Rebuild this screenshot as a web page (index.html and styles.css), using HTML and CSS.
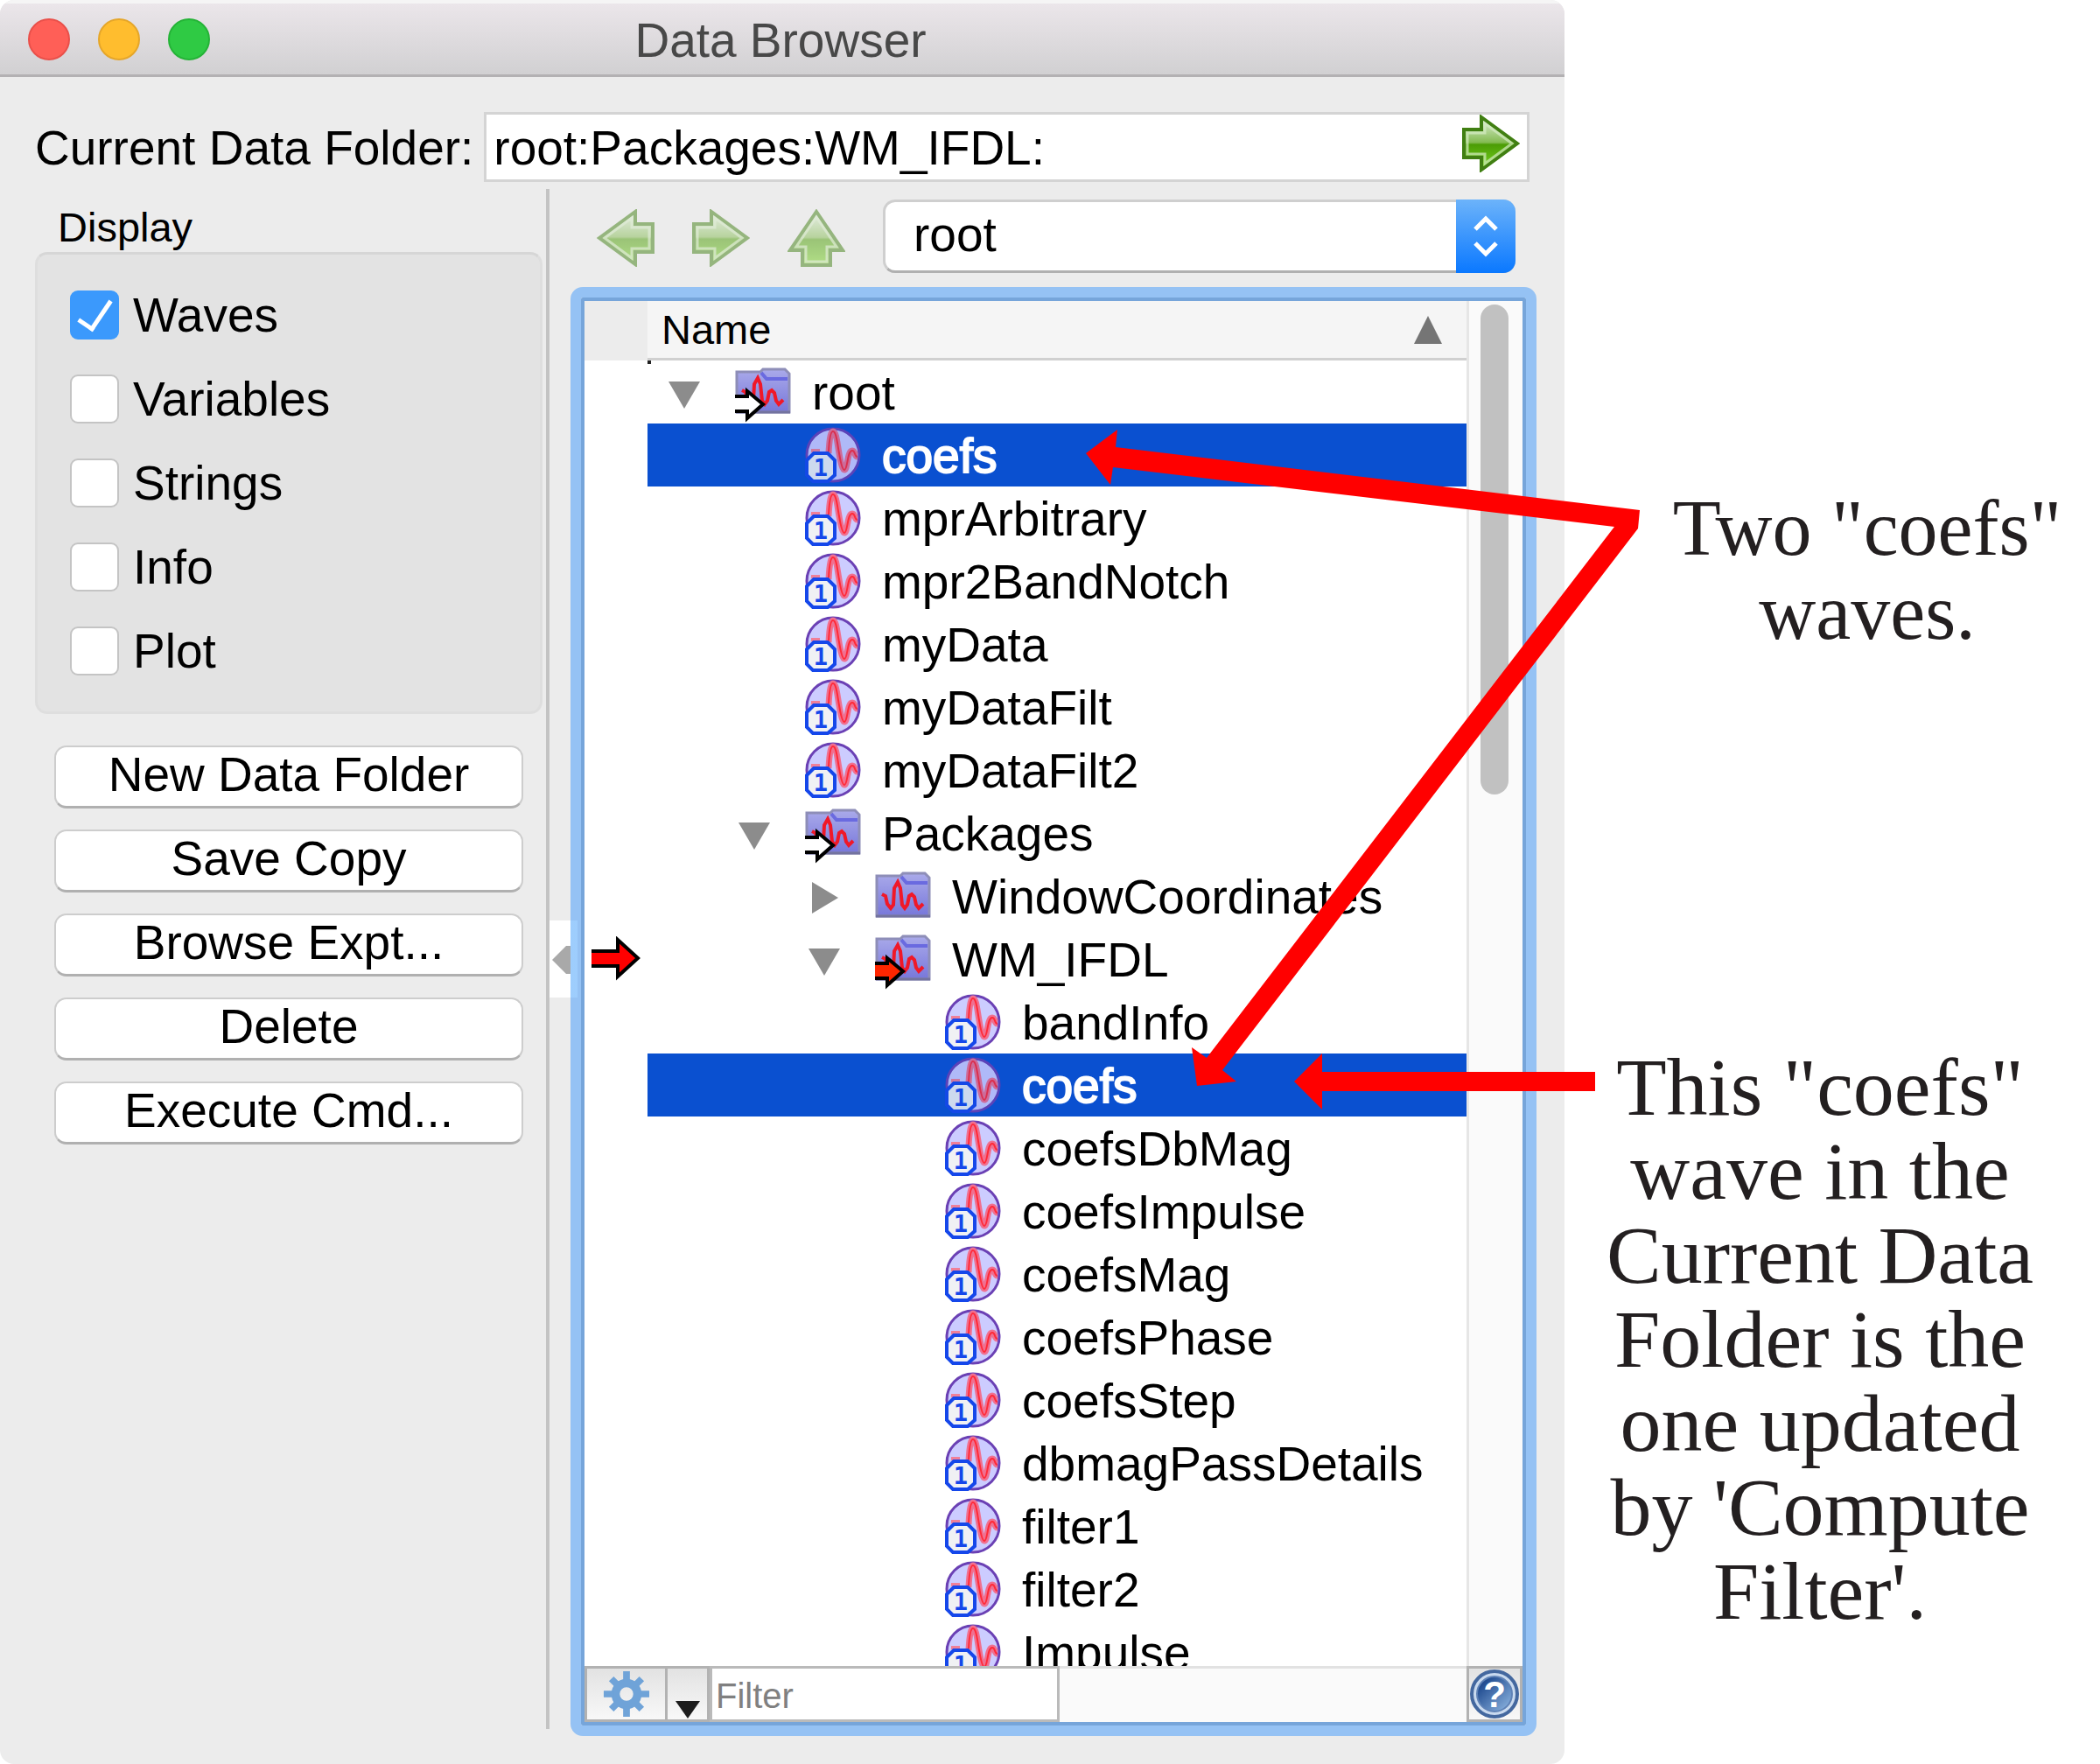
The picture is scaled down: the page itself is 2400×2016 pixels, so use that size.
FILE: index.html
```html
<!DOCTYPE html>
<html lang="en">
<head>
<meta charset="utf-8">
<title>Data Browser</title>
<link rel="stylesheet" href="styles.css">
</head>
<body>
<svg class="defs" aria-hidden="true">
  <defs>
    <linearGradient id="green" x1="0" y1="0" x2="0" y2="1">
      <stop offset="0.1" stop-color="#cfe6c0"/><stop offset="0.48" stop-color="#84bb52"/>
      <stop offset="0.52" stop-color="#4b9c04"/><stop offset="0.9" stop-color="#6fc81c"/>
    </linearGradient>
    <linearGradient id="folder" x1="0" y1="0" x2="0" y2="1">
      <stop offset="0" stop-color="#aaaaea"/><stop offset="1" stop-color="#7777da"/>
    </linearGradient>
    <linearGradient id="help" x1="0" y1="0" x2="1" y2="1">
      <stop offset="0.2" stop-color="#234e92"/><stop offset="0.9" stop-color="#86aedb"/>
    </linearGradient>
    <symbol id="i-arrow" viewBox="0 0 66 66">
      <path d="M2 17H22V3L63 33 22 63V49H2Z" fill="url(#green)" stroke="#407f12" stroke-width="4"/>
      <path d="M6 21H26V10L57 33 26 56V45H6Z" fill="none" stroke="#d6ecc4" stroke-opacity=".7" stroke-width="3"/>
    </symbol>
    <symbol id="i-folder" viewBox="0 0 64 72">
      <path d="M2 13H29L32 10H57L62 15V59H2Z" fill="url(#folder)" stroke="#8e8eb8" stroke-width="3"/>
      <path d="M30 14L36 21H60" fill="none" stroke="#6a6ae0" stroke-width="4"/>
      <path d="M1 59H63" stroke="#73739f" stroke-width="3"/>
      <path d="M8 34L12 36 14 45 18 50 21 46 22 27 26 20 29 27 31 46 34 50 37 46 39 36 42 34 45 37 47 46 50 50 55 45" fill="none" stroke="#f01828" stroke-width="4"/>
    </symbol>
    <symbol id="i-pointer" viewBox="0 0 64 72">
      <path d="M0 41H14V35L32 50 14 66V58H0Z"/>
      <path d="M0 41H14V35L32 50 14 66V58H0" fill="none" stroke="#000" stroke-width="4"/>
    </symbol>
    <symbol id="i-wave" viewBox="0 0 64 72">
      <circle cx="32" cy="36" r="30" fill="#ccccff" stroke="#6a40b4" stroke-width="3"/>
      <path d="M7 31H17" stroke="#f08098" stroke-width="4"/>
      <path d="M27 34C28 14 30 9 32 9 36 9 37 24 39 34 41 46 43 53 45 53 49 53 48 31 54 31 58 31 56 38 60 38" fill="none" stroke="#f07090" stroke-width="7"/>
      <path d="M27 32C28 14 30 9 32 9 36 9 37 24 39 34 41 46 43 53 45 53 49 53 48 31 54 31 58 31 56 38 60 38" fill="none" stroke="#ff2a38" stroke-width="2"/>
      <path d="M10 34H26L34 42V59L26 66H9L2 59V42Z" fill="#f0f1f4" stroke="#1547ea" stroke-width="4"/>
      <text x="18" y="60" text-anchor="middle" class="badge-num">1</text>
    </symbol>
    <symbol id="i-down" viewBox="0 0 36 72"><path d="M0 24H36L18 55Z" fill="#8c8c8c"/></symbol>
    <symbol id="i-right" viewBox="0 0 36 72"><path d="M4 20V56L34 38Z" fill="#8c8c8c"/></symbol>
  </defs>
</svg>

<main class="figure">
  <section class="window" aria-label="Data Browser">
    <header class="titlebar">
      <div class="lights">
        <button class="light light-close" aria-label="Close"></button>
        <button class="light light-min" aria-label="Minimize"></button>
        <button class="light light-zoom" aria-label="Zoom"></button>
      </div>
      <h1 class="title">Data Browser</h1>
    </header>

    <div class="path">
      <label for="cdf">Current Data Folder:</label>
      <div class="path-box">
        <input id="cdf" class="path-input" type="text" value="root:Packages:WM_IFDL:">
        <button class="icon-button" aria-label="Go"><svg class="arrow"><use href="#i-arrow"/></svg></button>
      </div>
    </div>

    <div class="panes">
      <aside class="sidebar">
        <fieldset class="display">
          <legend>Display</legend>
          <div class="group">
            <label class="check"><input type="checkbox" checked>Waves</label>
            <label class="check"><input type="checkbox">Variables</label>
            <label class="check"><input type="checkbox">Strings</label>
            <label class="check"><input type="checkbox">Info</label>
            <label class="check"><input type="checkbox">Plot</label>
          </div>
        </fieldset>
        <div class="actions">
          <button class="push">New Data Folder</button>
          <button class="push">Save Copy</button>
          <button class="push">Browse Expt...</button>
          <button class="push">Delete</button>
          <button class="push">Execute Cmd...</button>
        </div>
      </aside>

      <div class="splitter">
        <button class="handle" aria-label="Collapse sidebar"><svg viewBox="0 0 32 87"><path d="M3 44L19 28H24V60H19Z" fill="#a9a9a9"/></svg></button>
      </div>

      <div class="content">
        <div class="toolbar">
          <button class="icon-button" aria-label="Back"><svg class="arrow faded flip"><use href="#i-arrow"/></svg></button>
          <button class="icon-button" aria-label="Forward"><svg class="arrow faded"><use href="#i-arrow"/></svg></button>
          <button class="icon-button" aria-label="Up">
            <svg class="arrow faded" viewBox="0 0 66 66"><path d="M17 64V47H3L33 3 63 47H49V64Z" fill="url(#green)" stroke="#407f12" stroke-width="4"/><path d="M21 60V43H10L33 9 56 43H45V60Z" fill="none" stroke="#d6ecc4" stroke-opacity=".7" stroke-width="3"/></svg>
          </button>
          <div class="popup">
            <select aria-label="Folder"><option>root</option></select>
            <span class="stepper"><svg viewBox="0 0 68 84"><path d="M22 34L34 22 46 34M22 50L34 62 46 50" fill="none" stroke="#fff" stroke-width="5"/></svg></span>
          </div>
        </div>

        <div class="browser">
          <div class="columns">
            <div class="listing">
              <div class="head">
                <span class="head-gutter"></span>
                <div class="head-name">Name<svg class="sort" viewBox="0 0 32 32"><path d="M16 0L32 32H0Z" fill="#757575"/></svg></div>
              </div>
              <ul class="tree">
                <li class="row first"><span class="gutter"></span><div class="cell l0"><svg class="tri"><use href="#i-down"/></svg><svg class="icon"><use href="#i-folder"/><use href="#i-pointer" fill="#fff"/></svg>root</div></li>
                <li class="row selected"><span class="gutter"></span><div class="cell l1"><svg class="icon"><use href="#i-wave"/></svg>coefs</div></li>
                <li class="row"><span class="gutter"></span><div class="cell l1"><svg class="icon"><use href="#i-wave"/></svg>mprArbitrary</div></li>
                <li class="row"><span class="gutter"></span><div class="cell l1"><svg class="icon"><use href="#i-wave"/></svg>mpr2BandNotch</div></li>
                <li class="row"><span class="gutter"></span><div class="cell l1"><svg class="icon"><use href="#i-wave"/></svg>myData</div></li>
                <li class="row"><span class="gutter"></span><div class="cell l1"><svg class="icon"><use href="#i-wave"/></svg>myDataFilt</div></li>
                <li class="row"><span class="gutter"></span><div class="cell l1"><svg class="icon"><use href="#i-wave"/></svg>myDataFilt2</div></li>
                <li class="row"><span class="gutter"></span><div class="cell l1"><svg class="tri"><use href="#i-down"/></svg><svg class="icon"><use href="#i-folder"/><use href="#i-pointer" fill="#fff"/></svg>Packages</div></li>
                <li class="row"><span class="gutter"></span><div class="cell l2"><svg class="tri"><use href="#i-right"/></svg><svg class="icon"><use href="#i-folder"/></svg>WindowCoordinates</div></li>
                <li class="row"><span class="gutter"><svg class="current" viewBox="0 0 56 52"><path d="M0 17H30V3L53 25 30 47V33H0Z" fill="#f00"/><path d="M0 17H30V4L53 25 30 46V34H0" fill="none" stroke="#000" stroke-width="4"/></svg></span><div class="cell l2"><svg class="tri"><use href="#i-down"/></svg><svg class="icon"><use href="#i-folder"/><use href="#i-pointer" fill="#ff2600"/></svg>WM_IFDL</div></li>
                <li class="row"><span class="gutter"></span><div class="cell l3"><svg class="icon"><use href="#i-wave"/></svg>bandInfo</div></li>
                <li class="row selected"><span class="gutter"></span><div class="cell l3"><svg class="icon"><use href="#i-wave"/></svg>coefs</div></li>
                <li class="row"><span class="gutter"></span><div class="cell l3"><svg class="icon"><use href="#i-wave"/></svg>coefsDbMag</div></li>
                <li class="row"><span class="gutter"></span><div class="cell l3"><svg class="icon"><use href="#i-wave"/></svg>coefsImpulse</div></li>
                <li class="row"><span class="gutter"></span><div class="cell l3"><svg class="icon"><use href="#i-wave"/></svg>coefsMag</div></li>
                <li class="row"><span class="gutter"></span><div class="cell l3"><svg class="icon"><use href="#i-wave"/></svg>coefsPhase</div></li>
                <li class="row"><span class="gutter"></span><div class="cell l3"><svg class="icon"><use href="#i-wave"/></svg>coefsStep</div></li>
                <li class="row"><span class="gutter"></span><div class="cell l3"><svg class="icon"><use href="#i-wave"/></svg>dbmagPassDetails</div></li>
                <li class="row"><span class="gutter"></span><div class="cell l3"><svg class="icon"><use href="#i-wave"/></svg>filter1</div></li>
                <li class="row"><span class="gutter"></span><div class="cell l3"><svg class="icon"><use href="#i-wave"/></svg>filter2</div></li>
                <li class="row"><span class="gutter"></span><div class="cell l3"><svg class="icon"><use href="#i-wave"/></svg>Impulse</div></li>
              </ul>
            </div>
            <div class="scrollbar"><div class="thumb"></div></div>
          </div>
          <footer class="bottom">
            <button class="tool gear" aria-label="Options">
              <svg viewBox="0 0 56 56"><g stroke="#6fa3d8" fill="none"><circle cx="28" cy="28" r="13" stroke-width="10"/><path stroke-width="8" d="M28 1V13M28 43V55M1 28H13M43 28H55M10 10L17 17M39 39L46 46M46 10L39 17M17 39L10 46"/></g></svg>
            </button>
            <button class="tool menu" aria-label="Options menu"><svg viewBox="0 0 28 20"><path d="M0 0H28L14 20Z" fill="#1c1c1c"/></svg></button>
            <input class="filter" type="text" placeholder="Filter" aria-label="Filter">
            <span class="fill"></span>
            <button class="tool help" aria-label="Help">
              <svg viewBox="0 0 56 56"><circle cx="28" cy="28" r="26" fill="#c9daef" stroke="#44689f" stroke-width="4"/><circle cx="28" cy="28" r="20" fill="url(#help)" stroke="#5f82b6" stroke-width="2"/><text x="28" y="43" text-anchor="middle" class="help-mark">?</text></svg>
            </button>
          </footer>
        </div>
      </div>
    </div>
  </section>

  <aside class="notes">
    <p class="note note-two">Two "coefs"<br>waves.</p>
    <p class="note note-this">This "coefs"<br>wave in the<br>Current Data<br>Folder is the<br>one updated<br>by 'Compute<br>Filter'.</p>
  </aside>

  <svg class="callouts" viewBox="0 0 2400 2016" preserveAspectRatio="xMinYMin meet" aria-hidden="true">
    <path fill="#f00" d="M1241 518L1277 491 1275 511 1874 583 1872 604 1397 1223 1413 1236 1368 1241 1362 1197 1379 1209 1845 602 1272 534 1269 554Z"/>
    <path fill="#f00" d="M1479 1236L1511 1204V1225H1823V1247H1511V1268Z"/>
  </svg>
</main>
</body>
</html>
```
FILE: styles.css
```css
* { box-sizing: border-box; }

body {
  margin: 0;
  background: #fff;
  color: #000;
  font-family: "Liberation Sans", Arial, sans-serif;
  font-size: 55px;
  line-height: 58px;
}

button, input, select {
  margin: 0;
  padding: 0;
  border: 0;
  background: none;
  color: inherit;
  font: inherit;
}

svg { display: block; }
.defs { position: absolute; width: 0; height: 0; }

.figure {
  position: relative;
  display: flex;
  height: 100vh;
}

/* Window */
.window {
  flex: 0 0 74.5%;
  display: flex;
  flex-direction: column;
  min-width: 0;
  overflow: hidden;
  border-radius: 16px;
  background: #ececec;
}

.titlebar {
  display: grid;
  grid-template-columns: 1fr auto 1fr;
  align-items: center;
  height: 88px;
  padding: 0 36px 0 32px;
  border-top: 4px solid #f5f5f5;
  border-bottom: 3px solid #b3b1b3;
  background: linear-gradient(#ebe6ea, #d1d0d2);
}
.lights { display: flex; gap: 32px; }
.light { width: 48px; height: 48px; border-radius: 50%; }
.light-close { background: #ff5f57; border: 2px solid #e9504a; }
.light-min { background: #ffbd2e; border: 2px solid #e5a62a; }
.light-zoom { background: #2fca44; border: 2px solid #25b337; }
.title { margin: 0; padding-top: 2px; font-size: 55px; font-weight: 400; color: #484848; }

.path {
  display: flex;
  align-items: center;
  gap: 12px;
  padding: 40px 40px 0;
}
.path label { padding-top: 2px; }
.path-box {
  flex: 1;
  display: flex;
  align-items: flex-start;
  height: 80px;
  min-width: 0;
  padding-right: 8px;
  border: 3px solid #d4d4d4;
  background: #fff;
}
.path-input { flex: 1; min-width: 0; height: 74px; padding: 2px 0 0 8px; outline: 0; }
.icon-button { flex: none; }
.arrow { width: 66px; height: 66px; }
.faded { opacity: .5; }
.flip { transform: scaleX(-1); }

.panes { flex: 1; display: flex; min-height: 0; }

/* Sidebar */
.sidebar { flex: 0 0 624px; padding: 24px 4px 0 40px; }
.display { margin: 0; padding: 0; border: 0; min-width: 0; }
.display legend { padding: 0 26px; font-size: 47px; line-height: 56px; }
.group {
  display: flex;
  flex-direction: column;
  gap: 40px;
  padding: 41px 37px;
  border: 3px solid #dedede;
  border-top-color: #d6d6d6;
  border-radius: 14px;
  background: #e3e3e3;
}
.check { display: flex; align-items: center; gap: 16px; height: 56px; }
.check input {
  appearance: none;
  display: grid;
  place-items: center;
  width: 56px;
  height: 56px;
  border: 2px solid #c4c4c4;
  border-radius: 9px;
  background: #fff;
}
.check input:checked { border-color: #3b99fc; background: #3b99fc; }
.check input:checked::before {
  content: "";
  width: 16px;
  height: 36px;
  margin-bottom: 8px;
  border: solid #fff;
  border-width: 0 5px 5px 0;
  transform: rotate(34deg);
}
.actions {
  display: flex;
  flex-direction: column;
  gap: 24px;
  padding: 36px 22px 0;
}
.push {
  height: 72px;
  padding-bottom: 6px;
  border: 2px solid #cdcdcd;
  border-bottom: 3px solid #b0b0b0;
  border-radius: 14px;
  background: #fff;
}

.splitter {
  position: relative;
  flex: 0 0 4px;
  margin: 8px 0 40px;
  background: #c3c3c3;
}
.handle {
  position: absolute;
  z-index: 1;
  left: 4px;
  top: 836px;
  width: 32px;
  height: 88px;
  background: linear-gradient(90deg, #fff 24px, rgba(160, 208, 255, .8) 24px);
}

/* Browser pane */
.content {
  flex: 1;
  display: flex;
  flex-direction: column;
  gap: 16px;
  min-width: 0;
  padding: 20px 32px 32px 24px;
}
.toolbar {
  display: flex;
  align-items: center;
  gap: 43px;
  padding: 0 24px 0 30px;
}
.toolbar .icon-button { padding-top: 4px; }
.popup { position: relative; flex: 1; height: 84px; }
.popup select {
  appearance: none;
  width: 100%;
  height: 100%;
  padding: 0 80px 4px 32px;
  border: 3px solid #cfcfcf;
  border-bottom-color: #b0b0b0;
  border-radius: 14px;
  background: #fff;
}
.stepper {
  position: absolute;
  top: 0;
  right: 0;
  width: 68px;
  height: 84px;
  border-radius: 0 14px 14px 0;
  background: linear-gradient(#6cb3fa, #0a78ff);
}

.browser {
  flex: 1;
  display: flex;
  flex-direction: column;
  min-height: 0;
  border: 12px solid #95c2f4;
  border-radius: 14px;
  outline: 4px solid #76a5da;
  outline-offset: -16px;
  padding: 4px;
  background: #fff;
}
.columns { flex: 1; display: flex; min-height: 0; }
.listing { flex: 1; display: flex; flex-direction: column; min-width: 0; }
.head { display: flex; flex: none; height: 68px; }
.head-gutter { width: 72px; background: #ececec; }
.head-name {
  flex: 1;
  display: flex;
  align-items: center;
  justify-content: space-between;
  padding: 0 28px 0 16px;
  border-bottom: 3px solid #d0d0d0;
  background: #f5f5f5;
  font-size: 47px;
}
.sort { width: 32px; height: 32px; }

.tree { flex: 1; margin: 0; padding: 0; overflow: hidden; list-style: none; }
.row { display: flex; height: 72px; line-height: 75px; }
.gutter { display: flex; align-items: center; flex: 0 0 72px; padding-left: 8px; }
.current { width: 56px; height: 52px; }
.first .cell { background: linear-gradient(#222, #222) 0 0 / 4px 4px no-repeat; }
.cell { flex: 1; display: flex; justify-content: flex-start; white-space: nowrap; }
.l0 { padding-left: 100px; }
.l1 { padding-left: 180px; }
.l2 { padding-left: 260px; }
.l3 { padding-left: 340px; }
.tri { flex: none; width: 36px; height: 72px; margin: 0 40px 0 -76px; }
.icon { flex: none; width: 64px; height: 72px; margin-right: 24px; }
.selected .cell { background: #0a50d0; color: #fff; -webkit-text-stroke: 2px #fff; }
.selected .icon { opacity: .85; -webkit-text-stroke: 0; }
.badge-num { font: bold 27px "DejaVu Sans Mono", monospace; fill: #1547ea; }

.scrollbar {
  flex: 0 0 64px;
  padding: 4px 16px 0 13px;
  border-left: 3px solid #e6e6e6;
  background: #fafafa;
}
.thumb { height: 560px; border-radius: 16px; background: #c1c1c1; }

.bottom { display: flex; flex: none; height: 64px; }
.tool {
  display: flex;
  align-items: center;
  justify-content: center;
  border: 3px solid #b2b2b2;
  background: linear-gradient(#e2e2e2, #f8f8f8);
}
.gear { width: 95px; }
.gear svg { width: 54px; height: 54px; }
.menu { width: 48px; border-left: 0; align-items: flex-end; }
.menu svg { width: 28px; height: 20px; margin-bottom: 1px; }
.filter {
  width: 400px;
  padding: 4px 0 0 4px;
  border: 3px solid #bababa;
  background: #fff;
  font-size: 40px;
}
.filter::placeholder { color: #808080; opacity: 1; }
.fill { flex: 1; border-top: 3px solid #e2e2e2; background: #fafafa; }
.help { width: 64px; }
.help svg { width: 56px; height: 56px; }
.help-mark { font: bold 42px "Liberation Sans", sans-serif; fill: #fff; }

/* Annotations */
.notes { flex: 1; min-width: 0; }
.note {
  margin: 0;
  color: #231f20;
  font-family: "Liberation Serif", "Times New Roman", serif;
  line-height: 96px;
  text-align: center;
  white-space: nowrap;
}
.note-two { padding: 556px 0 0 80px; font-size: 90px; }
.note-this { padding: 446px 28px 0 0; font-size: 94px; }

.callouts {
  position: absolute;
  top: 0;
  left: 0;
  width: 100%;
  pointer-events: none;
}
```
